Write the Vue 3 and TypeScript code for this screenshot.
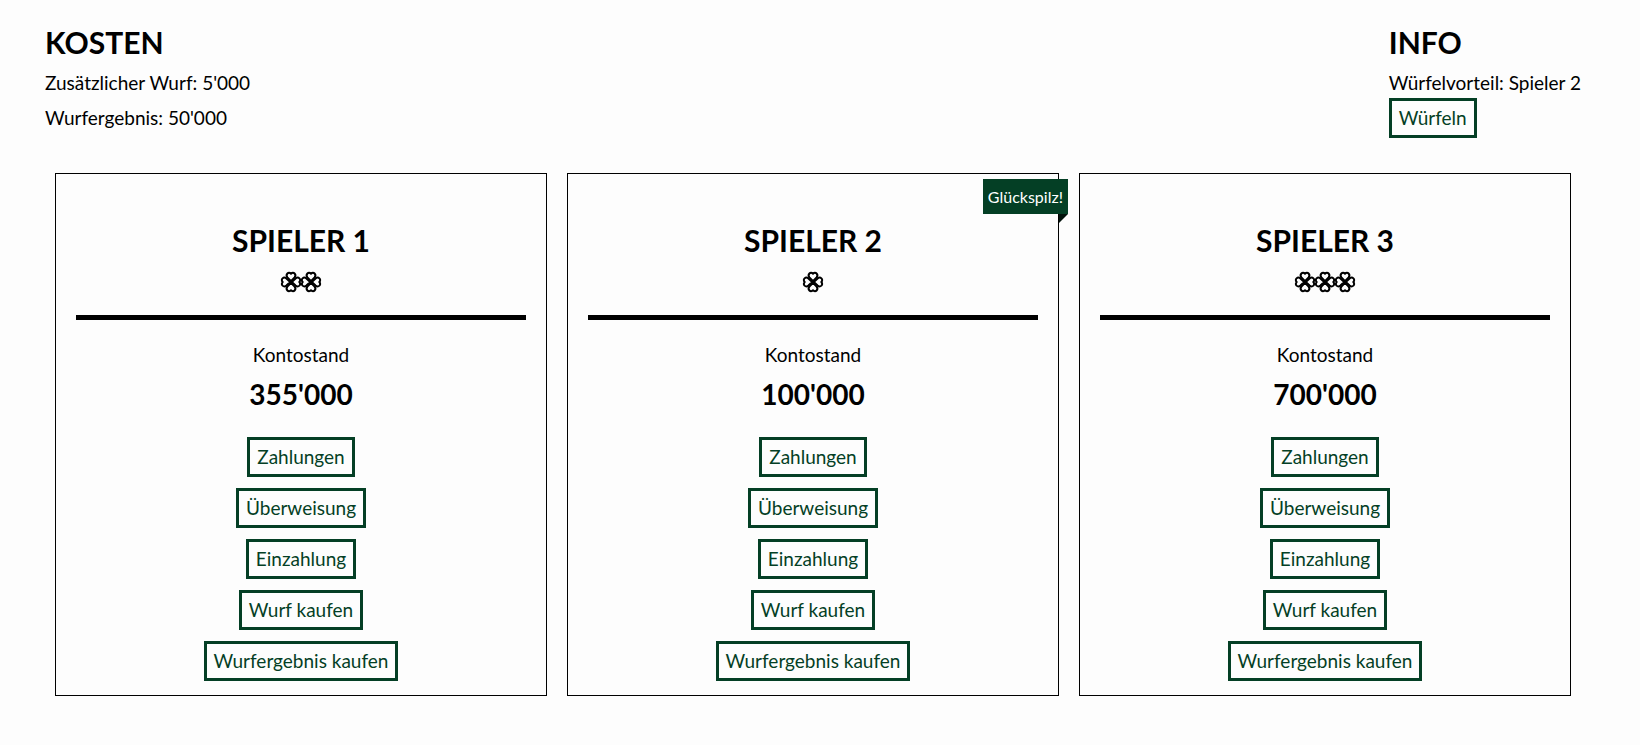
<script setup lang="ts">
interface Player {
  id: number
  name: string
  balance: number
  rolls: number
}

const extraRollCost = 5000
const resultCost = 50000
const luckyPlayer = 2

const players: Player[] = [
  { id: 1, name: 'Spieler 1', balance: 355000, rolls: 2 },
  { id: 2, name: 'Spieler 2', balance: 100000, rolls: 1 },
  { id: 3, name: 'Spieler 3', balance: 700000, rolls: 3 },
]

const actions: string[] = [
  'Zahlungen',
  'Überweisung',
  'Einzahlung',
  'Wurf kaufen',
  'Wurfergebnis kaufen',
]

const quarterTurns = [0, 90, 180, 270]

const formatAmount = (value: number): string =>
  String(value).replace(/\B(?=(\d{3})+$)/g, "'")
</script>

<template>
  <div class="page">
    <header class="top">
      <section>
        <h2>Kosten</h2>
        <p>Zusätzlicher Wurf: {{ formatAmount(extraRollCost) }}</p>
        <p>Wurfergebnis: {{ formatAmount(resultCost) }}</p>
      </section>
      <section>
        <h2>Info</h2>
        <p>Würfelvorteil: Spieler {{ luckyPlayer }}</p>
        <button type="button">Würfeln</button>
      </section>
    </header>

    <main class="players">
      <article v-for="player in players" :key="player.id" class="card">
        <span v-if="player.id === luckyPlayer" class="ribbon">Glückspilz!</span>
        <h2>{{ player.name }}</h2>
        <div class="clovers">
          <svg v-for="n in player.rolls" :key="n" viewBox="0 0 20 20" aria-hidden="true">
            <path
              v-for="turn in quarterTurns"
              :key="turn"
              :transform="`rotate(${turn} 10 10)`"
              d="M10 9.2 L6.4 5.4 C4.2 2.6 7.4 -0.8 10 1.7 C12.6 -0.8 15.8 2.6 13.6 5.4 Z"
            />
          </svg>
        </div>
        <hr />
        <p>Kontostand</p>
        <p class="balance">{{ formatAmount(player.balance) }}</p>
        <div class="actions">
          <button v-for="action in actions" :key="action" type="button">{{ action }}</button>
        </div>
      </article>
    </main>
  </div>
</template>

<style>
body {
  margin: 0;
  background: #fdfdfd;
}
</style>

<style scoped>
.page {
  padding: 25px 59px 40px 45px;
  font-family: Lato, "Liberation Sans", sans-serif;
  font-size: 19px;
  line-height: 35px;
  color: #000;
}

.top {
  display: flex;
  justify-content: space-between;
  align-items: flex-start;
}

h2 {
  margin: 0;
  font-size: 30px;
  line-height: 35px;
  font-weight: 700;
  text-transform: uppercase;
}

.top h2 {
  margin-bottom: 5px;
}

p {
  margin: 0;
}

button {
  display: block;
  box-sizing: border-box;
  height: 40px;
  margin: 0;
  padding: 0 7px;
  border: 3px solid #043f25;
  border-radius: 0;
  background: transparent;
  color: #043f25;
  font: inherit;
  line-height: 34px;
  cursor: pointer;
}

.top button {
  margin-top: -2px;
}

.players {
  display: grid;
  grid-template-columns: repeat(3, 1fr);
  gap: 20px;
  margin: 35px 10px 0;
}

.card {
  position: relative;
  padding: 49px 20px 14px;
  border: 1px solid #000;
  text-align: center;
}

.clovers {
  display: flex;
  justify-content: center;
  margin-top: 14px;
}

.clovers svg {
  display: block;
  width: 20px;
  height: 20px;
  overflow: visible;
  fill: none;
  stroke: #000;
  stroke-width: 2;
  stroke-linejoin: round;
}

hr {
  height: 5px;
  margin: 23px 0 17px;
  border: 0;
  background: #000;
}

.balance {
  margin-top: 5px;
  font-size: 28px;
  font-weight: 700;
}

.actions {
  display: flex;
  flex-direction: column;
  align-items: center;
  gap: 11px;
  margin-top: 25px;
}

.ribbon {
  position: absolute;
  top: 5px;
  right: -10px;
  padding: 0 5px;
  background: #043f25;
  color: #fff;
  font-size: 16px;
  line-height: 35px;
}

.ribbon::after {
  content: "";
  position: absolute;
  top: 100%;
  right: 0;
  border-top: 9px solid #02120b;
  border-right: 9px solid transparent;
}
</style>
